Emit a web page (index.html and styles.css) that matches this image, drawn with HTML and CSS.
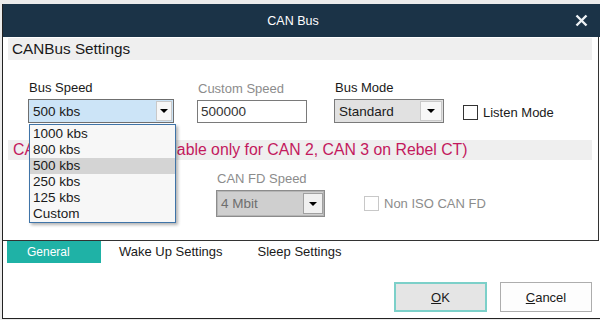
FILE: index.html
```html
<!DOCTYPE html>
<html lang="en">
<head>
  <meta charset="UTF-8">
  <title>CAN Bus</title>
  <link rel="stylesheet" href="styles.css">
</head>
<body>

  <div class="window">
    <div class="titlebar">
      <span class="title">CAN Bus</span>
      <svg class="close" width="13" height="13" viewBox="0 0 13 13">
        <path d="M1.5 1.5 L11.5 11.5 M11.5 1.5 L1.5 11.5" stroke="#eef2f5" stroke-width="2.4" fill="none"/>
      </svg>
    </div>

    <div class="panel">
      <div class="section-head">CANBus Settings</div>

      <div class="row row-bus">
        <div class="field f-speed">
          <label>Bus Speed</label>
          <div class="combo combo-focus">
            <span class="value">500 kbs</span>
            <span class="drop drop-small"><svg width="8" height="4" viewBox="0 0 8 4"><polygon points="0,0 8,0 4,4"/></svg></span>
          </div>
          <ul class="droplist">
            <li>1000 kbs</li>
            <li>800 kbs</li>
            <li class="sel">500 kbs</li>
            <li>250 kbs</li>
            <li>125 kbs</li>
            <li>Custom</li>
          </ul>
        </div>

        <div class="field f-custom">
          <label class="muted">Custom Speed</label>
          <div class="input">500000</div>
        </div>

        <div class="field f-mode">
          <label>Bus Mode</label>
          <div class="combo">
            <span class="value">Standard</span>
            <span class="drop"><svg width="8" height="4" viewBox="0 0 8 4"><polygon points="0,0 8,0 4,4"/></svg></span>
          </div>
        </div>

        <div class="check check-listen">
          <span class="box"></span>
          <span>Listen Mode</span>
        </div>
      </div>

      <div class="section-head fd-head">CAN FD Settings (Available only for CAN 2, CAN 3 on Rebel CT)</div>

      <div class="row row-fd">
        <div class="field f-fdspeed">
          <label class="muted">CAN FD Speed</label>
          <div class="combo combo-disabled">
            <span class="value">4 Mbit</span>
            <span class="drop"><svg width="8" height="4" viewBox="0 0 8 4"><polygon points="0,0 8,0 4,4"/></svg></span>
          </div>
        </div>

        <div class="check check-iso muted">
          <span class="box"></span>
          <span>Non ISO CAN FD</span>
        </div>
      </div>
    </div>

    <div class="tabs">
      <div class="tab active">General</div>
      <div class="tab">Wake Up Settings</div>
      <div class="tab">Sleep Settings</div>
    </div>

    <div class="actions">
      <button class="btn btn-ok"><u>O</u>K</button>
      <button class="btn"><u>C</u>ancel</button>
    </div>
  </div>

</body>
</html>
```

FILE: styles.css
```css
* {
  box-sizing: border-box;
}
body {
  margin: 0;
  background: #ebebeb;
  font-family: "Liberation Sans", Arial, sans-serif;
  color: #1a1a1a;
}
.window {
  margin: 4px 0 0 2px;
  height: 315px;
  background: #fff;
  border-left: 1px solid #222;
  border-bottom: 1px solid #222;
}
.titlebar {
  height: 33px;
  background: #1b3347;
  color: #fff;
  font-size: 12.5px;
  display: grid;
  grid-template-columns: 1fr auto 1fr;
  align-items: center;
  padding-right: 17px;
}
.title {
  grid-column: 2;
}
.close {
  grid-column: 3;
  justify-self: end;
  margin-right: -5px;
}
.panel {
  width: 596px;
  height: 204px;
  border-right: 1px solid #333;
  border-bottom: 1px solid #333;
  padding: 1px 6px 0 5px;
}
.section-head {
  height: 22px;
  line-height: 22px;
  background: #efefef;
  padding-left: 4px;
  font-size: 15.3px;
}
.fd-head {
  margin-top: 17px;
  height: 20px;
  line-height: 20px;
  padding-left: 5px;
  color: #c3195d;
  font-size: 15.8px;
  white-space: nowrap;
}
.row {
  display: flex;
  align-items: flex-end;
}
.row-bus {
  margin-top: 19px;
  padding-left: 20px;
}
.row-fd {
  margin-top: 10px;
  padding-left: 208px;
}
.field {
  display: flex;
  flex-direction: column;
  gap: 3px;
  position: relative;
}
.field label {
  font-size: 13px;
  line-height: 17px;
  padding-left: 1px;
}
.muted {
  color: #8c8c8c;
}
.f-speed {
  width: 146px;
}
.f-custom {
  width: 110px;
  margin-left: 23px;
}
.f-mode {
  width: 110px;
  margin-left: 27px;
}
.f-fdspeed {
  width: 109px;
}
.combo {
  height: 24px;
  border: 1px solid #7a7a7a;
  background: #e1e1e1;
  display: flex;
  align-items: center;
  padding-left: 4px;
  font-size: 13.5px;
}
.combo .value {
  flex: 1;
}
.drop {
  width: 22px;
  height: 20px;
  margin-right: 1px;
  background: #f7f7f7;
  border: 1px solid #c9c9c9;
  display: flex;
  align-items: center;
  justify-content: center;
}
.drop-small {
  width: 16px;
}
.combo-focus {
  background: #cce4f7;
  border-color: #6f6f6f;
}
.combo-disabled {
  height: 27px;
  background: #cfcfcf;
  border-color: #8c8c8c;
  box-shadow: inset 0 0 0 1px #b5b5b5;
  color: #6e6e6e;
}
.combo-disabled .drop {
  width: 20px;
  height: 21px;
  background: #f0f0f0;
  border-color: #a0a0a0;
}
.input {
  height: 23px;
  border: 1px solid #7a7a7a;
  padding-left: 3px;
  line-height: 21px;
  font-size: 13.5px;
  color: #333;
}
.droplist {
  position: absolute;
  top: calc(100% + 1px);
  left: 1px;
  width: 147px;
  height: 99px;
  margin: 0;
  padding: 1px 0 0;
  list-style: none;
  background: #f7f7f7;
  border: 1px solid #3f74a8;
  box-shadow: 2px 2px 3px rgba(0, 0, 0, 0.3);
  z-index: 2;
}
.droplist li {
  height: 16px;
  line-height: 16px;
  padding-left: 3px;
  font-size: 13.5px;
}
.droplist .sel {
  background: #d4d4d4;
}
.check {
  display: flex;
  align-items: center;
  gap: 5px;
  font-size: 13px;
}
.check .box {
  width: 15px;
  height: 15px;
  border: 1px solid #333;
  background: #fff;
}
.check-listen {
  margin-left: 19px;
  margin-bottom: 3px;
}
.check-iso {
  margin-left: 39px;
  margin-bottom: 6px;
}
.check-iso .box {
  border-color: #c8c8c8;
}
.tabs {
  display: flex;
  height: 22px;
  padding-left: 4px;
  font-size: 13px;
  line-height: 22px;
}
.tab {
  padding: 0 17px 0 18px;
}
.tab.active {
  width: 94px;
  padding: 0 0 0 20px;
  background: #1fb2a6;
  color: #fff;
  font-size: 12px;
}
.actions {
  display: flex;
  justify-content: flex-end;
  gap: 13px;
  padding: 19px 8px 0 0;
}
.btn {
  width: 92px;
  height: 30px;
  border: 1px solid #adadad;
  background: #fdfdfd;
  font-family: "Liberation Sans", Arial, sans-serif;
  font-size: 13px;
  color: #1a1a1a;
}
.btn-ok {
  width: 93px;
  background: #e5e5e5;
  border: 2px solid #7cd0c9;
}
```
